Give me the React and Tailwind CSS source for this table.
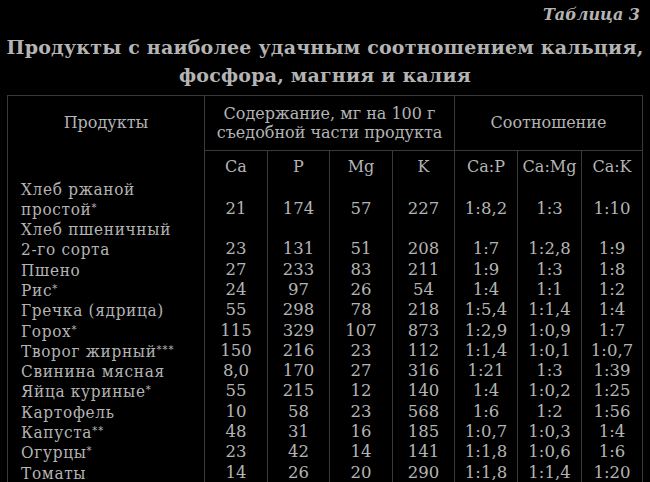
import React from "react";

const rows = [
  { name: "Хлеб ржаной" },
  { name: "простой", star: "*", v: ["21", "174", "57", "227", "1:8,2", "1:3", "1:10"] },
  { name: "Хлеб пшеничный" },
  { name: "2-го сорта", v: ["23", "131", "51", "208", "1:7", "1:2,8", "1:9"] },
  { name: "Пшено", v: ["27", "233", "83", "211", "1:9", "1:3", "1:8"] },
  { name: "Рис", star: "*", v: ["24", "97", "26", "54", "1:4", "1:1", "1:2"] },
  { name: "Гречка (ядрица)", v: ["55", "298", "78", "218", "1:5,4", "1:1,4", "1:4"] },
  { name: "Горох", star: "*", v: ["115", "329", "107", "873", "1:2,9", "1:0,9", "1:7"] },
  { name: "Творог жирный", star: "***", v: ["150", "216", "23", "112", "1:1,4", "1:0,1", "1:0,7"] },
  { name: "Свинина мясная", v: ["8,0", "170", "27", "316", "1:21", "1:3", "1:39"] },
  { name: "Яйца куриные", star: "*", v: ["55", "215", "12", "140", "1:4", "1:0,2", "1:25"] },
  { name: "Картофель", v: ["10", "58", "23", "568", "1:6", "1:2", "1:56"] },
  { name: "Капуста", star: "**", v: ["48", "31", "16", "185", "1:0,7", "1:0,3", "1:4"] },
  { name: "Огурцы", star: "*", v: ["23", "42", "14", "141", "1:1,8", "1:0,6", "1:6"] },
  { name: "Томаты", v: ["14", "26", "20", "290", "1:1,8", "1:1,4", "1:20"] },
];

const subs = ["Ca", "P", "Mg", "K", "Ca:P", "Ca:Mg", "Ca:K"];
const widths = ["w-[197px]", "w-[63px]", "w-[62px]", "w-[63px]", "w-[62px]", "w-[63px]", "w-[64px]", "w-[61px]"];

export default function App() {
  return (
    <div
      className="w-[650px] h-[482px] overflow-hidden bg-black text-[#b4b4b4]"
      style={{ fontFamily: '"DejaVu Serif", "Liberation Serif", serif' }}
    >
      <div className="pt-[5px] pr-[10px] text-right italic font-bold text-[16px] leading-[20px]">Таблица 3</div>
      <h1 className="mt-[8px] text-center font-bold text-[19px] leading-[28px] tracking-[0.2px]">
        Продукты с наиболее удачным соотношением кальция,
        <br />
        фосфора, магния и калия
      </h1>
      <table className="mt-[6px] ml-[7px] border-collapse table-fixed text-[16px]">
        <colgroup>
          {widths.map((w, i) => (
            <col key={i} className={w} />
          ))}
        </colgroup>
        <thead>
          <tr className="h-[55px]">
            <th rowSpan={2} className="border border-[#3a3a3a] border-b-0 font-normal align-top pt-[15px]">
              Продукты
            </th>
            <th colSpan={4} className="border border-[#3a3a3a] font-normal leading-[19px]">
              Содержание, мг на 100 г
              <br />
              съедобной части продукта
            </th>
            <th colSpan={3} className="border border-[#3a3a3a] font-normal">
              Соотношение
            </th>
          </tr>
          <tr className="h-[28px]">
            {subs.map((s) => (
              <th key={s} className="border-x border-[#3a3a3a] font-normal align-bottom leading-[20px] pb-[2px]">
                {s}
              </th>
            ))}
          </tr>
        </thead>
        <tbody className="text-[16.5px]">
          {rows.map((r, i) => (
            <tr key={i} className="h-[20.3px] leading-[20.3px]">
              <td className="border-x border-[#3a3a3a] pl-[13px] py-0 whitespace-nowrap font-stretch-condensed text-[17px] tracking-[0.7px]">
                {r.name}
                {r.star && (
                  <span className="relative -top-[4px] text-[11px] leading-[0] tracking-[1px]">{r.star}</span>
                )}
              </td>
              {subs.map((s, j) => (
                <td key={s} className="border-x border-[#3a3a3a] py-0 text-center whitespace-nowrap">
                  {r.v ? r.v[j] : ""}
                </td>
              ))}
            </tr>
          ))}
        </tbody>
      </table>
    </div>
  );
}
